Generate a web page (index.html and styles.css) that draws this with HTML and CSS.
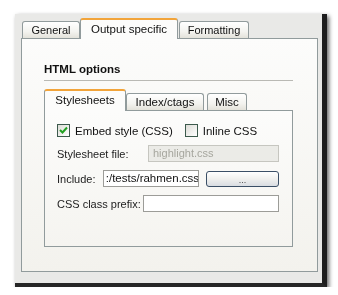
FILE: index.html
```html
<!DOCTYPE html>
<html lang="en">

<head>
    <meta charset="UTF-8">
    <title>Output specific</title>
    <link rel="stylesheet" href="styles.css">
</head>

<body>

    <div class="frame">
        <div class="dialog">
            <div class="tabs">
                <div class="tab tab-general">General</div>
                <div class="tab tab-active tab-output">Output specific</div>
                <div class="tab tab-format">Formatting</div>
            </div>
            <div class="panel">
                <div class="heading">HTML options</div>

                <div class="tabs inner-tabs">
                    <div class="tab tab-active tab-sheets">Stylesheets</div>
                    <div class="tab tab-index">Index/ctags</div>
                    <div class="tab tab-misc">Misc</div>
                </div>
                <div class="panel inner-panel">
                    <div class="row row-checks">
                        <label class="check">
                            <span class="box">
                                <svg width="11" height="11" viewBox="0 0 11 11">
                                    <path d="M2 5 L4.5 7.5 L9 2.5" fill="none" stroke="#21a121" stroke-width="2"/>
                                </svg>
                            </span>
                            Embed style (CSS)
                        </label>
                        <label class="check check-inline">
                            <span class="box"></span>
                            Inline CSS
                        </label>
                    </div>
                    <div class="row">
                        <span class="label">Stylesheet file:</span>
                        <div class="field field-disabled field-sheet">highlight.css</div>
                    </div>
                    <div class="row">
                        <span class="label">Include:</span>
                        <div class="field field-include">:/tests/rahmen.css</div>
                        <button class="button">...</button>
                    </div>
                    <div class="row">
                        <span class="label">CSS class prefix:</span>
                        <div class="field field-prefix"></div>
                    </div>
                </div>
            </div>
        </div>
    </div>

</body>

</html>
```

FILE: styles.css
```css
body {
    margin: 0;
    background-color: #ffffff;
    font-family: "Liberation Sans", Arial, sans-serif;
    font-size: 11px;
    color: #111;
    padding: 14px 0 0 15px;
}

/* dark drop shadow under the window */
.frame {
    width: 307px;
    border-right: 5px solid #1e1e1e;
    border-bottom: 4px solid #262626;
    filter: drop-shadow(2px 2px 2px rgba(0, 0, 0, 0.6));
}

.dialog {
    width: 307px;
    height: 269px;
    box-sizing: border-box;
    background-color: #e9e9e7;
    padding: 4px 4px 11px 6px;
}

.tabs {
    display: flex;
    align-items: flex-end;
    height: 20px;
    padding-left: 1px;
}

.tab {
    height: 17px;
    box-sizing: border-box;
    border: 1px solid #919b9c;
    border-bottom: none;
    border-radius: 3px 3px 0 0;
    background: linear-gradient(#ffffff, #f3f3ef 60%, #e3e2da);
    text-align: center;
    line-height: 16px;
    white-space: nowrap;
}

.tab-active {
    position: relative;
    z-index: 1;
    height: 21px;
    margin-bottom: -1px;
    border-top: 2px solid #f2a43a;
    background: #fcfcfb;
    line-height: 18px;
    font-size: 11.5px;
}

.tab-general { width: 58px; }
.tab-output { width: 98px; }
.tab-format { width: 70px; margin-left: 1px; }

.panel {
    height: 234px;
    box-sizing: border-box;
    border: 1px solid #919b9c;
    background: linear-gradient(#fcfcfb, #f3f2ed);
    padding: 0 24px 0 22px;
}

.heading {
    font-weight: bold;
    font-size: 11.5px;
    line-height: 13px;
    margin-top: 24px;
    padding-bottom: 4px;
    border-bottom: 1px solid #b9b9b4;
}

.inner-tabs {
    margin-top: 8px;
    height: 21px;
    padding-left: 0;
}

.inner-tabs .tab { font-size: 11.5px; }
.inner-tabs .tab-active { height: 22px; line-height: 19px; }

.tab-sheets { width: 82px; }
.tab-index { width: 78px; }
.tab-misc { width: 40px; margin-left: 3px; }

.inner-panel {
    height: 137px;
    width: 249px;
    padding: 13px 13px 0 12px;
    background: linear-gradient(#fcfcfb, #f5f4f0);
}

.row {
    display: flex;
    justify-content: space-between;
    align-items: center;
    height: 17px;
    margin-top: 8px;
    font-size: 11px;
    white-space: nowrap;
}

.row-checks {
    justify-content: flex-start;
    height: 13px;
    margin-top: 0;
    margin-bottom: 2px;
    font-size: 11.5px;
}

.check {
    display: flex;
    align-items: center;
    gap: 5px;
}

.check-inline { margin-left: 12px; }

.box {
    width: 13px;
    height: 13px;
    box-sizing: border-box;
    border: 1px solid #3c5a4c;
    background: linear-gradient(135deg, #dcdcd6, #ffffff);
    display: flex;
    align-items: center;
    justify-content: center;
}

.label {
    color: #222;
}

.field {
    height: 17px;
    box-sizing: border-box;
    border: 1px solid #9c9c98;
    background-color: #ffffff;
    padding-left: 3px;
    line-height: 15px;
    overflow: hidden;
}

.field-disabled {
    background-color: #ebebe7;
    border-color: #c6c6c0;
    color: #a6a69e;
    padding-left: 4px;
}

.field-sheet { width: 131px; }
.field-include { width: 96px; padding-left: 2px; font-size: 11.5px; }
.field-prefix { width: 136px; }

.button {
    width: 73px;
    height: 16px;
    box-sizing: border-box;
    border: 1px solid #3b4f66;
    border-radius: 3px;
    background: linear-gradient(#ffffff, #f0f0ee 50%, #d9dde2);
    font-family: "Liberation Sans", Arial, sans-serif;
    font-size: 9px;
    color: #444;
    padding: 2px 0 0 0;
    line-height: 12px;
}
```
